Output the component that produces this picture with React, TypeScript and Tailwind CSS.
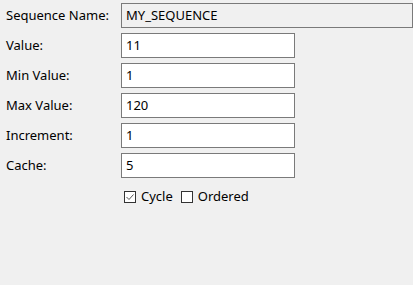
import React from 'react';

const rows = [
  { label: 'Value:', value: '11' },
  { label: 'Min Value:', value: '1' },
  { label: 'Max Value:', value: '120' },
  { label: 'Increment:', value: '1' },
  { label: 'Cache:', value: '5' },
];

export default function App() {
  return (
    <div className="h-[285px] w-[413px] bg-[#f0f0f0] pt-[3px] text-[13px] text-black" style={{ fontFamily: '"Noto Sans", sans-serif' }}>
      <div className="flex h-[25px] items-center">
        <span className="w-[121px] pl-[6px]">Sequence Name:</span>
        <div className="flex h-[25px] flex-1 items-center border border-[#7a7a7a] bg-[#f0f0f0] pl-[4px]">MY_SEQUENCE</div>
      </div>
      {rows.map((r) => (
        <div key={r.label} className="mt-[5px] flex h-[25px] items-center">
          <span className="w-[121px] pl-[6px]">{r.label}</span>
          <div className="flex h-[25px] w-[174px] items-center border border-[#7a7a7a] bg-white pl-[4px]">{r.value}</div>
        </div>
      ))}
      <div className="mt-[11px] flex h-[16px] items-center pl-[124px]">
        <span className="flex h-[12px] w-[12px] items-center justify-center border border-[#333] bg-white">
          <svg width="10" height="10" viewBox="0 0 10 10">
            <path d="M1.5 5 L4 7.5 L8.5 2.5" fill="none" stroke="#555" strokeWidth="1" />
          </svg>
        </span>
        <span className="ml-[5px]">Cycle</span>
        <span className="ml-[8px] h-[12px] w-[12px] border border-[#333] bg-white" />
        <span className="ml-[5px]">Ordered</span>
      </div>
    </div>
  );
}
